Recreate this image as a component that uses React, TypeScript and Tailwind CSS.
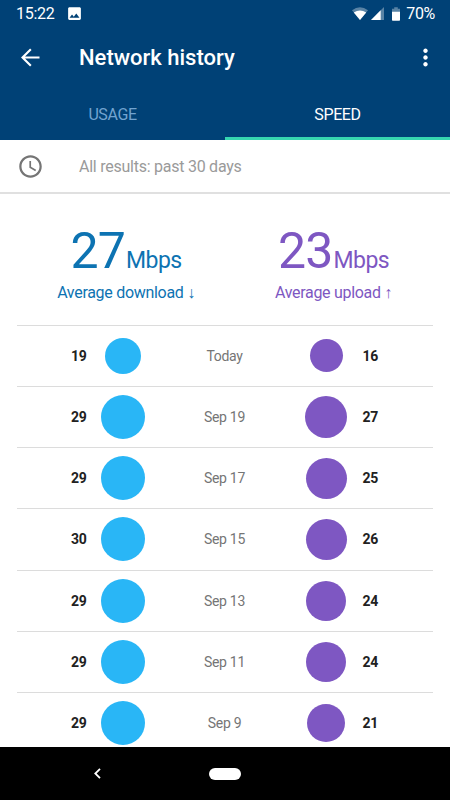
import { MdAccessTime, MdImage, MdMoreVert } from "react-icons/md";

type Result = {
	day: string;
	download: number;
	upload: number;
	downloadSize: number;
	uploadSize: number;
};

const results: Result[] = [
	{ day: "Today", download: 19, upload: 16, downloadSize: 36, uploadSize: 33 },
	{ day: "Sep 19", download: 29, upload: 27, downloadSize: 44, uploadSize: 42 },
	{ day: "Sep 17", download: 29, upload: 25, downloadSize: 44, uploadSize: 41 },
	{ day: "Sep 15", download: 30, upload: 26, downloadSize: 44, uploadSize: 41 },
	{ day: "Sep 13", download: 29, upload: 24, downloadSize: 44, uploadSize: 40 },
	{ day: "Sep 11", download: 29, upload: 24, downloadSize: 44, uploadSize: 40 },
	{ day: "Sep 9", download: 29, upload: 21, downloadSize: 44, uploadSize: 37.5 },
];

const StatusBar = () => (
	<div className="flex h-7 items-center justify-between pl-4 pr-[15px] text-base tracking-[-0.3px] text-white">
		<div className="flex items-center gap-[11px]">
			<span className="w-[39px] whitespace-nowrap">15:22</span>
			<MdImage className="mb-px size-[17px]" />
		</div>
		<div className="flex items-center">
			<svg className="mr-[3px] mb-px h-[13px] w-4" viewBox="0 0 16 13">
				<path d="M0 3.2Q8-2.6 16 3.2L8 13Z" fill="#fff" opacity=".35" />
				<path d="M1.8 5.4Q8 1.6 14.2 5.4L8 13Z" fill="#fff" />
			</svg>
			<svg className="mr-2 mb-px size-[13px]" viewBox="0 0 13 13">
				<path d="M13 0V13H0Z" fill="#fff" opacity=".35" />
				<path d="M9.7 3.3V13H0Z" fill="#fff" />
			</svg>
			<svg className="mr-[6px] mb-px h-[14px] w-[8px]" viewBox="0 0 9 15">
				<path d="M2.5 0h4v1.6H9V6H0V1.6h2.5Z" fill="#fff" opacity=".35" />
				<path d="M0 5h9v9.2a.8.8 0 0 1-.8.8H.8a.8.8 0 0 1-.8-.8Z" fill="#fff" />
			</svg>
			<span>70%</span>
		</div>
	</div>
);

const Header = () => (
	<header className="flex h-[140px] shrink-0 flex-col bg-[#004176] text-white">
		<StatusBar />
		<div className="flex h-[59px] items-center pl-[17px] pr-[11px]">
			<svg className="size-[27px]" viewBox="0 0 24 24" fill="none" stroke="currentColor" strokeWidth="1.9">
				<path d="M20 12H5.2M12.3 4.6 4.9 12l7.4 7.4" />
			</svg>
			<h1 className="ml-[35px] grow text-[22px] font-medium">Network history</h1>
			<MdMoreVert className="size-[27px]" />
		</div>
		<nav className="grid h-[53px] grid-cols-2 text-center text-base tracking-[-0.4px]">
			<button className="border-b-[3px] border-transparent pt-1.5 text-[#72a4d0]">USAGE</button>
			<button className="border-b-[3px] border-[#36d6b0] pt-1.5">SPEED</button>
		</nav>
	</header>
);

const Average = ({ value, label, color }: { value: number; label: string; color: string }) => (
	<div className={`flex flex-col items-center ${color}`}>
		<div className="flex items-baseline gap-px whitespace-nowrap">
			<span className="text-[50px] leading-[58px] tracking-[-0.8px]">{value}</span>
			<span className="text-[23px] tracking-[-0.6px]">Mbps</span>
		</div>
		<p className="mt-px whitespace-pre text-base leading-6 tracking-[-0.3px]">{label}</p>
	</div>
);

const ResultRow = ({ result }: { result: Result }) => (
	<li className="grid h-[61.25px] grid-cols-[69.5px_73px_130px_73px_69.5px] items-center border-t border-[#dcdcdc] text-sm tracking-[-0.3px]">
		<span className="text-right font-bold text-[#212121]">{result.download}</span>
		<span
			className="justify-self-center rounded-full bg-[#29b6f6]"
			style={{ width: result.downloadSize, height: result.downloadSize }}
		/>
		<span className="text-center text-[#757575]">{result.day}</span>
		<span
			className="justify-self-center rounded-full bg-[#7e57c2]"
			style={{ width: result.uploadSize, height: result.uploadSize }}
		/>
		<span className="font-bold text-[#212121]">{result.upload}</span>
	</li>
);

const App = () => {
	return (
		<div className="flex h-[800px] w-[450px] flex-col overflow-hidden bg-white font-['Roboto',sans-serif]">
			<Header />

			{/* Filter */}
			<div className="flex h-[54px] shrink-0 items-center border-b-2 border-[#e0e0e0] pl-[17px]">
				<MdAccessTime className="size-[27px] text-[#757575]" />
				<span className="ml-[35px] pt-[2px] text-base tracking-[-0.25px] text-[#9a9a9a]">All results: past 30 days</span>
			</div>

			<main className="min-h-0 grow overflow-hidden px-[17px]">
				<section className="grid h-[130.5px] grid-cols-[218px_197px] pt-[28px]">
					<Average value={27} label="Average download ↓" color="text-[#0d73b2]" />
					<Average value={23} label="Average upload ↑" color="text-[#7e57c2]" />
				</section>
				<ul>
					{results.map((result) => (
						<ResultRow key={result.day} result={result} />
					))}
				</ul>
			</main>

			{/* System navigation */}
			<footer className="flex h-[53px] shrink-0 items-center bg-black pl-[94px]">
				<svg className="h-[11px] w-[7px]" viewBox="0 0 7 11" fill="none" stroke="#fff" strokeWidth="1.8">
					<path d="M6 .8 1.3 5.5 6 10.2" />
				</svg>
				<div className="ml-[108px] h-3 w-8 rounded-full bg-white" />
			</footer>
		</div>
	);
};

export default App;
